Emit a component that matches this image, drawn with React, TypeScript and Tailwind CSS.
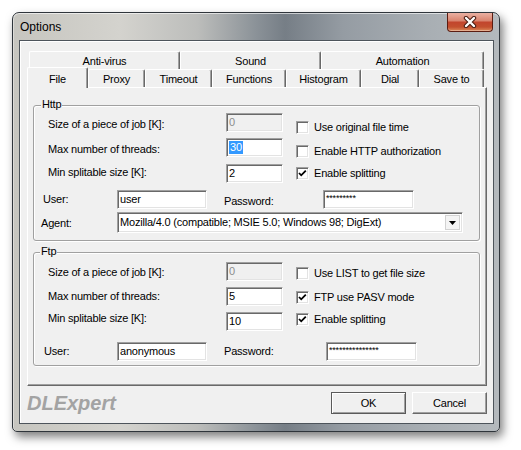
import React from 'react';

const sunken =
  'border border-t-[#a0a0a0] border-l-[#a0a0a0] border-r-white border-b-white shadow-[inset_1px_1px_0_#696969,inset_-1px_-1px_0_#e3e3e3]';

interface TextBoxProps {
  value?: string;
  className?: string;
  disabled?: boolean;
  selected?: boolean;
  password?: boolean;
}

function TextBox({ value = '', className = '', disabled, selected, password }: TextBoxProps) {
  return (
    <div
      className={`${sunken} ${className} h-[19px] shrink-0 flex pl-[2px] ${
        disabled ? 'bg-[#f0f0f0] text-[#8d8d8d]' : 'bg-white'
      } ${password ? 'items-start pt-[1px] text-[9px] tracking-[-0.2px]' : 'items-center'}`}
    >
      {selected ? <span className="bg-[#3399ff] text-white leading-[13px] px-px">{value}</span> : value}
    </div>
  );
}

function CheckBox({ checked, label, className }: { checked?: boolean; label: string; className: string }) {
  return (
    <div className={`flex items-center gap-[5px] ${className}`}>
      <div className={`${sunken} w-[13px] h-[13px] bg-white flex items-center justify-center`}>
        {checked && (
          <svg width="11" height="11" viewBox="0 0 11 11">
            <path d="M2 5 L4.2 7.3 L8.8 2.6" fill="none" stroke="#000" strokeWidth="1.8" />
          </svg>
        )}
      </div>
      <span className="leading-[13px] whitespace-nowrap">{label}</span>
    </div>
  );
}

function Group({ label, labelLeft, className, children }: { label: string; labelLeft: string; className: string; children: React.ReactNode }) {
  return (
    <div
      className={`relative w-[447px] border border-[#a0a0a0] rounded-[3px] shadow-[inset_1px_1px_0_#ffffff,1px_1px_0_#ffffff] ${className}`}
    >
      <span className={`absolute -top-[8px] ${labelLeft} px-px bg-[#f0f0f0] leading-[13px]`}>{label}</span>
      {children}
    </div>
  );
}

const tabBase =
  'h-[18px] shrink-0 flex items-center justify-center border-t border-l border-white border-r border-r-[#696969] shadow-[inset_-1px_0_0_#a0a0a0] rounded-t-[2px] bg-[#f0f0f0]';

const topTabs = [
  { label: 'Anti-virus', w: 'w-[151px]' },
  { label: 'Sound', w: 'w-[141px]' },
  { label: 'Automation', w: 'w-[163px]' },
];

const bottomTabs = [
  { label: 'Proxy', w: 'w-[57px]' },
  { label: 'Timeout', w: 'w-[67px]' },
  { label: 'Functions', w: 'w-[74px]' },
  { label: 'Histogram', w: 'w-[75px]' },
  { label: 'Dial', w: 'w-[58px]' },
  { label: 'Save to', w: 'w-[65px]' },
];

export default function App() {
  return (
    <div className="w-[521px] h-[450px] bg-white pl-[12px] pt-[12px] font-['Liberation_Sans',Arial,sans-serif] text-black">
      <div className="w-[488px] h-[420px] flex flex-col pl-[6px] pr-[5px] pb-[7px] rounded-t-[7px] rounded-b-[5px] border border-[#2f353b] bg-[linear-gradient(90deg,#c6c5bf_0%,#d4d3ce_22%,#bcbdbb_38%,#8b9298_50%,#767e86_56%,#959ca3_68%,#a8aeb3_85%,#b4b9bd_100%)] shadow-[3px_5px_10px_rgba(0,0,0,0.5),inset_0_1px_0_rgba(255,255,255,0.6),inset_1px_0_0_rgba(255,255,255,0.4)]">
        {/* title bar */}
        <div className="h-[27px] flex items-start justify-between">
          <span className="self-center pl-px text-[12px] leading-none">Options</span>
          <div className="mr-px w-[46px] h-[19px] rounded-b-[4px] border border-t-0 border-[#5b1d12] bg-[linear-gradient(180deg,#eab0a2_0%,#d98570_42%,#c2452d_52%,#c3502f_78%,#dc8a5a_100%)] shadow-[inset_0_-1px_0_rgba(255,255,255,0.35)] flex items-center justify-center">
            <svg width="14" height="12" viewBox="0 0 14 12">
              <path d="M3 2 L11 10 M11 2 L3 10" stroke="#4a1c12" strokeWidth="4.4" strokeLinecap="round" />
              <path d="M3 2 L11 10 M11 2 L3 10" stroke="#ffffff" strokeWidth="2.4" strokeLinecap="round" />
            </svg>
          </div>
        </div>

        {/* client area */}
        <div className="flex-1 flex flex-col border border-[#4d545b] bg-[#f0f0f0] pt-[10px] pl-[7px] pr-[5px] shadow-[inset_1px_1px_0_#ffffff] text-[11px] tracking-[-0.2px]">
          <div className="flex flex-col w-[460px]">
            <div className="flex h-[18px] ml-[2px]">
              {topTabs.map((t) => (
                <div key={t.label} className={`${tabBase} ${t.w}`}>
                  <span className="mt-[2px]">{t.label}</span>
                </div>
              ))}
            </div>
            <div className="flex h-[18px] items-end">
              <div className="relative z-10 w-[61px] h-[21px] -mb-px shrink-0 flex justify-center pt-[3px] bg-[#f0f0f0] border-t border-l border-white border-r border-r-[#696969] shadow-[inset_-1px_0_0_#a0a0a0] rounded-t-[2px]">
                File
              </div>
              {bottomTabs.map((t) => (
                <div key={t.label} className={`${tabBase} ${t.w}`}>
                  <span className="mt-[2px]">{t.label}</span>
                </div>
              ))}
            </div>

            {/* tab page */}
            <div className="h-[299px] flex flex-col pl-[5px] pt-[17px] bg-[#f0f0f0] border border-t-white border-l-white border-r-[#696969] border-b-[#696969] shadow-[inset_-1px_-1px_0_#a0a0a0]">
              <Group label="Http" labelLeft="left-[7px]" className="h-[136px]">
                <div className="flex items-start h-[19px] mt-[7px] pl-[14px]">
                  <span className="w-[178px] mt-[5px] leading-[13px]">Size of a piece of job [K]:</span>
                  <TextBox value="0" disabled className="w-[57px]" />
                  <CheckBox label="Use original file time" className="ml-[13px] mt-[8px]" />
                </div>
                <div className="flex items-start h-[19px] mt-[6px] pl-[14px]">
                  <span className="w-[178px] mt-[5px] leading-[13px]">Max number of threads:</span>
                  <TextBox value="30" selected className="w-[57px]" />
                  <CheckBox label="Enable HTTP authorization" className="ml-[13px] mt-[7px]" />
                </div>
                <div className="flex items-start h-[19px] mt-[7px] pl-[14px]">
                  <span className="w-[178px] mt-[2px] leading-[13px]">Min splitable size [K]:</span>
                  <TextBox value="2" className="w-[57px]" />
                  <CheckBox label="Enable splitting" checked className="ml-[13px] mt-[3px]" />
                </div>
                <div className="flex items-start h-[19px] mt-[7px] pl-[9px]">
                  <span className="w-[74px] mt-[3px] leading-[13px]">User:</span>
                  <TextBox value="user" className="w-[90px]" />
                  <span className="w-[99px] ml-[17px] mt-[5px] leading-[13px]">Password:</span>
                  <TextBox value="*********" password className="w-[91px]" />
                </div>
                <div className="flex items-center h-[21px] mt-[3px] pl-[7px]">
                  <span className="w-[76px] mt-[2px] leading-[13px]">Agent:</span>
                  <div className={`${sunken} w-[346px] h-[21px] bg-white flex items-center justify-between pl-[2px] pr-[2px]`}>
                    <span className="whitespace-nowrap">Mozilla/4.0 (compatible; MSIE 5.0; Windows 98; DigExt)</span>
                    <div className="w-[15px] h-[15px] flex items-center justify-center bg-[#f4f4f4] border border-[#d2d2d2]">
                      <svg width="7" height="4" viewBox="0 0 7 4">
                        <path d="M0 0 H7 L3.5 4 Z" fill="#000" />
                      </svg>
                    </div>
                  </div>
                </div>
              </Group>

              <Group label="Ftp" labelLeft="left-[6px]" className="h-[114px] mt-[11px]">
                <div className="flex items-start h-[19px] mt-[9px] pl-[14px]">
                  <span className="w-[178px] mt-[4px] leading-[13px]">Size of a piece of job [K]:</span>
                  <TextBox value="0" disabled className="w-[57px]" />
                  <CheckBox label="Use LIST to get file size" className="ml-[13px] mt-[5px]" />
                </div>
                <div className="flex items-start h-[19px] mt-[6px] pl-[14px]">
                  <span className="w-[178px] mt-[3px] leading-[13px]">Max number of threads:</span>
                  <TextBox value="5" className="w-[57px]" />
                  <CheckBox label="FTP use PASV mode" checked className="ml-[13px] mt-[4px]" />
                </div>
                <div className="flex items-start h-[19px] mt-[6px] pl-[14px]">
                  <span className="w-[178px] mt-0 leading-[13px]">Min splitable size [K]:</span>
                  <TextBox value="10" className="w-[57px]" />
                  <CheckBox label="Enable splitting" checked className="ml-[13px] mt-[1px]" />
                </div>
                <div className="flex items-start h-[19px] mt-[11px] pl-[10px]">
                  <span className="w-[73px] mt-[3px] leading-[13px]">User:</span>
                  <TextBox value="anonymous" className="w-[90px]" />
                  <span className="w-[102px] ml-[17px] mt-[3px] leading-[13px]">Password:</span>
                  <TextBox value="***************" password className="w-[91px]" />
                </div>
              </Group>
            </div>
          </div>

          {/* footer */}
          <div className="mt-[6px] w-[460px] flex items-center justify-between">
            <span className="text-[20px] font-bold italic leading-none tracking-normal text-[#a3a3a3]">DLExpert</span>
            <div className="flex gap-[6px]">
              <button className="w-[75px] h-[22px] flex items-center justify-center bg-[#f0f0f0] border border-[#5a5a5a] shadow-[inset_1px_1px_0_#ffffff,inset_-1px_-1px_0_#a0a0a0]">
                OK
              </button>
              <button className="w-[75px] h-[22px] flex items-center justify-center bg-[#f0f0f0] border border-t-white border-l-white border-r-[#696969] border-b-[#696969] shadow-[inset_-1px_-1px_0_#a0a0a0]">
                Cancel
              </button>
            </div>
          </div>
        </div>
      </div>
    </div>
  );
}
